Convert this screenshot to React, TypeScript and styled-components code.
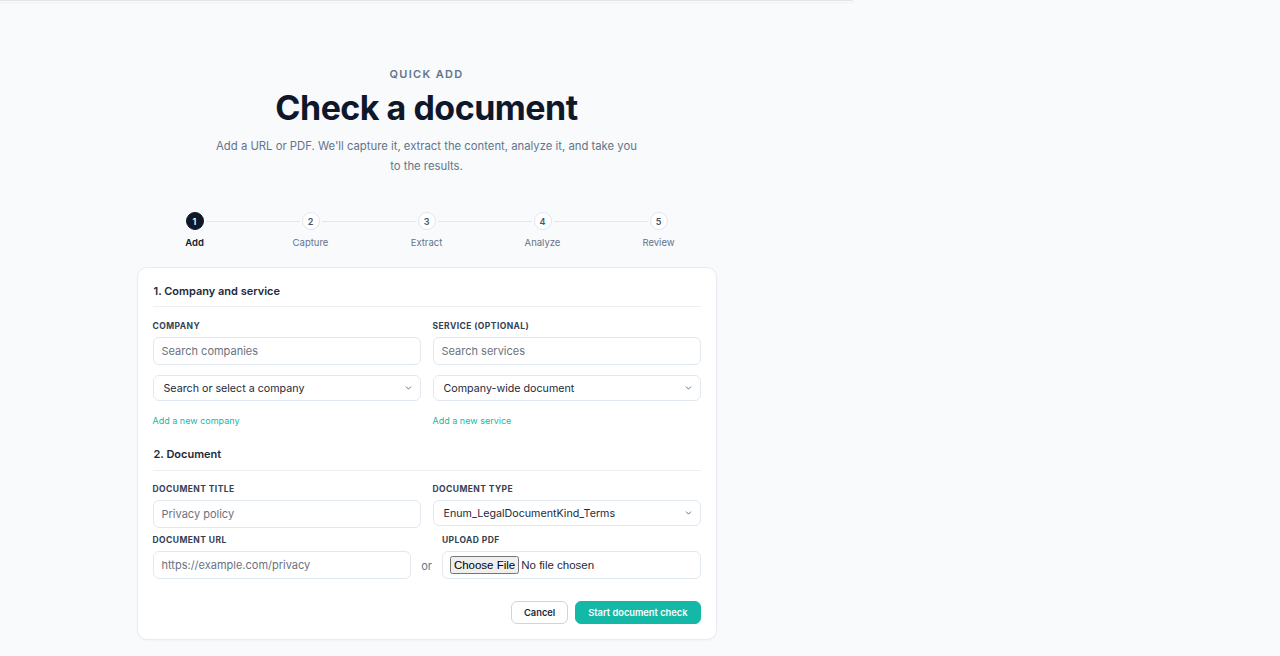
import React from "react";
import styled, { createGlobalStyle } from "styled-components";
import { ChevronDown } from "lucide-react";

const GlobalStyle = createGlobalStyle`
  html, body {
    margin: 0;
    padding: 0;
    background: #f8fafc;
  }
  body {
    font-family: Inter, "Noto Sans", sans-serif;
    color: #0f172a;
    -webkit-font-smoothing: antialiased;
  }
  * {
    box-sizing: border-box;
  }
`;

const Page = styled.div`
  min-height: 656px;
  background: #f8fafc;
`;

const TopRule = styled.div`
  width: 853px;
  height: 2px;
  border-top: 1px solid #e2e5ea;
  box-shadow: 0 1px 2px rgba(15, 23, 42, 0.04);
`;

const Main = styled.main`
  width: 853px;
  display: flex;
  flex-direction: column;
  align-items: center;
  padding-top: 64px;
  padding-bottom: 16px;
`;

const Eyebrow = styled.div`
  font-size: 11px;
  line-height: 16px;
  font-weight: 600;
  letter-spacing: 0.12em;
  text-transform: uppercase;
  color: #64748b;
`;

const Title = styled.h1`
  margin: 6px 0 0;
  font-size: 34px;
  line-height: 40px;
  font-weight: 700;
  letter-spacing: -0.015em;
  color: #0f172a;
`;

const Subtitle = styled.p`
  margin: 8px 0 0;
  max-width: 430px;
  text-align: center;
  font-size: 11.3px;
  line-height: 20px;
  color: #64748b;
`;

const Stepper = styled.div`
  width: 580px;
  margin-top: 36px;
`;

const Track = styled.div`
  display: flex;
  align-items: center;
  padding: 0 49px;
`;

const Dot = styled.div<{ active?: boolean }>`
  width: 18px;
  height: 18px;
  flex: none;
  border-radius: 50%;
  display: flex;
  align-items: center;
  justify-content: center;
  font-size: 9px;
  font-weight: 600;
  border: 1px solid ${p => (p.active ? "#0f172a" : "#e2e8f0")};
  background: ${p => (p.active ? "#0f172a" : "#ffffff")};
  color: ${p => (p.active ? "#ffffff" : "#475569")};
`;

const Connector = styled.div`
  flex: 1;
  height: 1px;
  margin: 0 2px;
  background: #e2e8f0;
`;

const StepLabels = styled.div`
  display: grid;
  grid-template-columns: repeat(5, 1fr);
  margin-top: 6px;
`;

const StepLabel = styled.div<{ active?: boolean }>`
  text-align: center;
  font-size: 9.5px;
  line-height: 14px;
  font-weight: ${p => (p.active ? 600 : 400)};
  color: ${p => (p.active ? "#0f172a" : "#64748b")};
`;

const Card = styled.form`
  width: 580px;
  margin-top: 17px;
  background: #ffffff;
  border: 1px solid #e8ebf0;
  border-radius: 10px;
  padding: 15px;
  box-shadow: 0 1px 2px rgba(15, 23, 42, 0.03);
`;

const SectionTitle = styled.h2<{ spaced?: boolean }>`
  margin: ${p => (p.spaced ? "18px" : "0")} 0 0;
  padding: 0 0 ${p => (p.spaced ? 8 : 7)}px 1px;
  font-size: 11px;
  line-height: 16px;
  font-weight: 600;
  color: #1e293b;
  border-bottom: 1px solid #eef1f4;
`;

const TwoCols = styled.div<{ top?: number }>`
  display: grid;
  grid-template-columns: 1fr 1fr;
  column-gap: 12px;
  margin-top: ${p => p.top ?? 0}px;
`;

const Field = styled.div`
  display: flex;
  flex-direction: column;
`;

const Label = styled.label`
  font-size: 8.5px;
  line-height: 12px;
  font-weight: 700;
  letter-spacing: 0.05em;
  text-transform: uppercase;
  color: #334155;
  margin-bottom: 5px;
`;

const TextInput = styled.input`
  height: 28px;
  width: 100%;
  border: 1px solid #e2e8f0;
  border-radius: 6px;
  background: #ffffff;
  padding: 0 8px;
  font-family: inherit;
  font-size: 11px;
  color: #1e293b;
  outline: none;

  &::placeholder {
    color: #6b7280;
  }
`;

const SelectWrap = styled.div<{ top?: number }>`
  position: relative;
  margin-top: ${p => p.top ?? 0}px;

  svg {
    position: absolute;
    right: 8px;
    top: 50%;
    transform: translateY(-50%);
    pointer-events: none;
    color: #475569;
  }
`;

const Select = styled.select`
  appearance: none;
  -webkit-appearance: none;
  height: 26px;
  width: 100%;
  border: 1px solid #e2e8f0;
  border-radius: 6px;
  background: #ffffff;
  padding: 0 22px 0 10px;
  font-family: inherit;
  font-size: 10.7px;
  color: #1e293b;
  outline: none;
`;

const AddLink = styled.a`
  display: block;
  margin-top: 13px;
  font-size: 9px;
  line-height: 14px;
  color: #14b8a6;
  text-decoration: none;
  cursor: pointer;
`;

const SourceRow = styled.div`
  display: grid;
  grid-template-columns: 1fr auto 1fr;
  column-gap: 10px;
  align-items: end;
  margin-top: 6px;
`;

const Or = styled.span`
  height: 28px;
  line-height: 30px;
  font-size: 11px;
  color: #64748b;
`;

const FileBox = styled.div`
  height: 28px;
  display: flex;
  align-items: center;
  border: 1px solid #e2e8f0;
  border-radius: 6px;
  background: #ffffff;
  padding: 0 7px;

  input {
    font-family: Arial, "Liberation Sans", sans-serif;
    font-size: 11.5px;
    color: #1e293b;
  }

  input::file-selector-button {
    font-family: Arial, "Liberation Sans", sans-serif;
    font-size: 11.5px;
    padding: 1px 2px;
    margin-right: 2px;
  }
`;

const Actions = styled.div`
  display: flex;
  justify-content: flex-end;
  gap: 7px;
  margin-top: 22px;
`;

const Button = styled.button<{ primary?: boolean }>`
  height: 23px;
  padding: 0 12px;
  border-radius: 6px;
  font-family: inherit;
  font-size: 9.3px;
  font-weight: 600;
  cursor: pointer;
  border: 1px solid ${p => (p.primary ? "#14b8a6" : "#cbd5e1")};
  background: ${p => (p.primary ? "#14b8a6" : "#ffffff")};
  color: ${p => (p.primary ? "#ffffff" : "#1e293b")};
`;

const steps = ["Add", "Capture", "Extract", "Analyze", "Review"];

function Dropdown({ value, top }: { value: string; top?: number }) {
  return (
    <SelectWrap top={top}>
      <Select defaultValue={value}>
        <option value={value}>{value}</option>
      </Select>
      <ChevronDown size={9} strokeWidth={2.2} />
    </SelectWrap>
  );
}

export default function App() {
  return (
    <Page>
      <GlobalStyle />
      <TopRule />
      <Main>
        <Eyebrow>Quick add</Eyebrow>
        <Title>Check a document</Title>
        <Subtitle>
          Add a URL or PDF. We'll capture it, extract the content, analyze it, and take you to the
          results.
        </Subtitle>

        <Stepper>
          <Track>
            {steps.map((s, i) => (
              <React.Fragment key={s}>
                {i > 0 && <Connector />}
                <Dot active={i === 0}>{i + 1}</Dot>
              </React.Fragment>
            ))}
          </Track>
          <StepLabels>
            {steps.map((s, i) => (
              <StepLabel key={s} active={i === 0}>
                {s}
              </StepLabel>
            ))}
          </StepLabels>
        </Stepper>

        <Card onSubmit={e => e.preventDefault()}>
          <SectionTitle>1. Company and service</SectionTitle>
          <TwoCols top={13}>
            <Field>
              <Label>Company</Label>
              <TextInput placeholder="Search companies" />
              <Dropdown value="Search or select a company" top={10} />
              <AddLink>Add a new company</AddLink>
            </Field>
            <Field>
              <Label>Service (optional)</Label>
              <TextInput placeholder="Search services" />
              <Dropdown value="Company-wide document" top={10} />
              <AddLink>Add a new service</AddLink>
            </Field>
          </TwoCols>

          <SectionTitle spaced>2. Document</SectionTitle>
          <TwoCols top={12}>
            <Field>
              <Label>Document title</Label>
              <TextInput placeholder="Privacy policy" />
            </Field>
            <Field>
              <Label>Document type</Label>
              <Dropdown value="Enum_LegalDocumentKind_Terms" />
            </Field>
          </TwoCols>

          <SourceRow>
            <Field>
              <Label>Document URL</Label>
              <TextInput placeholder="https://example.com/privacy" />
            </Field>
            <Or>or</Or>
            <Field>
              <Label>Upload PDF</Label>
              <FileBox>
                <input type="file" accept="application/pdf" />
              </FileBox>
            </Field>
          </SourceRow>

          <Actions>
            <Button type="button">Cancel</Button>
            <Button type="submit" primary>
              Start document check
            </Button>
          </Actions>
        </Card>
      </Main>
    </Page>
  );
}
